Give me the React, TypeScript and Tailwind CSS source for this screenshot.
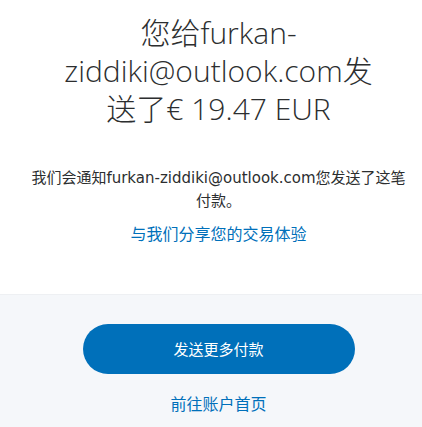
import React from 'react';

const font = '"Open Sans", "Noto Sans CJK SC", sans-serif';
const bodyFont = '"DejaVu Sans", "Noto Sans CJK SC", sans-serif';

export default function App() {
    return (
        <div className="w-[422px] h-[427px] bg-white flex flex-col" style={{ fontFamily: font }}>
            <div className="ml-[15px] w-[407px] pt-[14px] text-center">
                <h1 className="mx-auto w-[320px] text-[30px] leading-[38px] font-light text-[#2c2e2f] break-words">
                    您给furkan-ziddiki@outlook.com发送了€ 19.47 EUR
                </h1>
                <p className="mx-auto mt-[39px] w-[385px] text-[15px] leading-[23px] text-[#2c2e2f] break-all" style={{ fontFamily: bodyFont }}>
                    我们会通知furkan-ziddiki@outlook.com您发送了这笔付款。
                </p>
                <a href="#" className="mt-[10px] block text-[16px] leading-[23px] text-[#0070ba]">
                    与我们分享您的交易体验
                </a>
            </div>
            <div className="mt-auto h-[133px] bg-[#f5f7fa] border-t border-[#eef0f3] pl-[15px] flex flex-col items-center pt-[29px]">
                <button className="w-[272px] h-[50px] rounded-full bg-[#0070ba] text-white text-[15px]">
                    发送更多付款
                </button>
                <a href="#" className="mt-[19px] text-[16px] leading-[22px] text-[#0070ba]">
                    前往账户首页
                </a>
            </div>
        </div>
    );
}
